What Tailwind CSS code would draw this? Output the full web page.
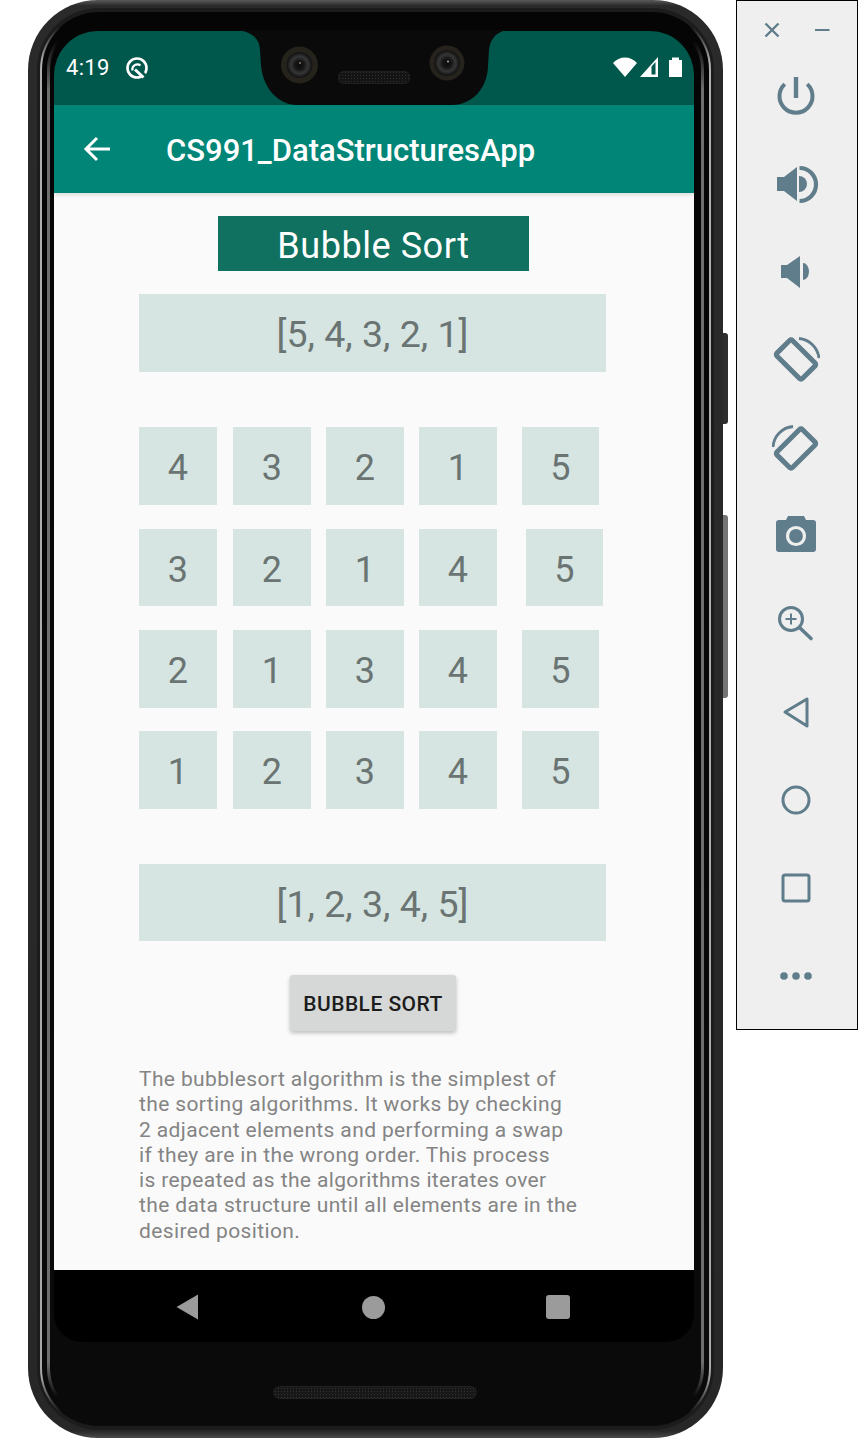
<!DOCTYPE html>
<html><head><meta charset="utf-8"><script src="https://cdn.jsdelivr.net/npm/@tailwindcss/browser@4"></script></head>
<body class="bg-white">
<div class="flex w-[858px] h-[1438px] overflow-hidden font-['Roboto',sans-serif]">
  <div class="relative w-[695px] h-[1438px] ml-[28px] shrink-0">
    <svg class="absolute inset-0 overflow-visible" width="695" height="1438" viewBox="28 0 695 1438">
      <defs>
        <linearGradient id="edge" x1="0" y1="0" x2="0" y2="1"><stop offset="0" stop-color="#5a5a5a"/><stop offset=".004" stop-color="#2a2a2a"/><stop offset=".995" stop-color="#272727"/><stop offset="1" stop-color="#4a4a4a"/></linearGradient>
        <linearGradient id="hi" x1="0" y1="0" x2="0" y2="1"><stop offset=".01" stop-color="#b0b0b0" stop-opacity="0"/><stop offset=".035" stop-color="#b0b0b0"/><stop offset=".965" stop-color="#a8a8a8"/><stop offset=".99" stop-color="#a8a8a8" stop-opacity="0"/></linearGradient>
        <linearGradient id="hi2" x1="0" y1="0" x2="0" y2="1"><stop offset=".015" stop-color="#6e6e6e" stop-opacity="0"/><stop offset=".05" stop-color="#6e6e6e"/><stop offset=".96" stop-color="#6e6e6e"/><stop offset=".985" stop-color="#6e6e6e" stop-opacity="0"/></linearGradient>
        <linearGradient id="bez" x1="0" y1="0" x2="0" y2="1"><stop offset="0" stop-color="#050505"/><stop offset=".9" stop-color="#0a0a0a"/></linearGradient>
        <pattern id="mesh" width="3" height="3" patternUnits="userSpaceOnUse"><rect width="3" height="3" fill="#141414"/><rect width="1" height="1" fill="#303030"/></pattern>
        <radialGradient id="lens"><stop offset="0" stop-color="#0c0c0c"/><stop offset=".35" stop-color="#161616"/><stop offset=".65" stop-color="#363636"/><stop offset=".95" stop-color="#141414"/></radialGradient>
      </defs>
      <rect x="716" y="333" width="12" height="91" rx="3" fill="#2e2e2e"/>
      <rect x="716" y="515" width="12" height="183" rx="3" fill="#747474"/>
      <rect x="28" y="0" width="695" height="1438" rx="70" fill="url(#edge)"/>
      <rect x="37" y="8" width="677" height="1422" rx="62" fill="#1c1c1c"/>
      <rect x="41" y="12" width="669" height="1414" rx="58" fill="url(#bez)" stroke="url(#hi)" stroke-width="2"/>
      <rect x="48.500" y="20" width="654" height="1398" rx="50" fill="none" stroke="url(#hi2)" stroke-width="3"/>
    </svg>
    <div class="relative pt-[31px] pl-[26px]">
      <div class="relative w-[640px]">
        <div class="h-[74px] bg-[#00574b] rounded-t-[44px] flex items-center text-white">
          <span class="ml-[12px] text-[22px] leading-none tracking-[0.3px]">4:19</span>
          <svg class="ml-[15px]" width="24" height="24" viewBox="0 0 24 24" fill="none" stroke="#fff"><circle cx="12" cy="12" r="9.500" stroke-width="2.600"/><path d="M14 14.500l7 7.500" stroke="#00574b" stroke-width="5"/><path d="M7.500 14.500a5 5 0 0 1 8-5" stroke-width="2.200"/><path d="M10 13.500l8.500 8" stroke-width="3"/></svg>
          <svg class="ml-auto mr-[12px] mb-[2px]" width="69" height="22" viewBox="0 0 69 22" fill="#fff"><path d="M0 7C6-.5 18-.5 24 7L12 21z"/><path fill-rule="evenodd" d="M27 21L45 1v20zM38.500 18.500h4V6l-4 4.500z"/><path d="M56 4h3V1.500h7V4h3v17H56z"/></svg>
        </div>
        <svg class="absolute left-0 top-0 overflow-visible" width="640" height="74" viewBox="54 31 640 74">
          <path fill="#0a0a0a" d="M233 30C250 30 260 38 260 50L261 65C263 90 280 105 297 105L452 105C472 105 488 88 488 65L489 50C490 38 498 30 510 30Z"/>
          <circle cx="299.500" cy="65" r="18.500" fill="#26221c"/><circle cx="299.500" cy="65" r="13" fill="url(#lens)"/><circle cx="300" cy="63" r="1" fill="#8a7a6c"/>
          <circle cx="447" cy="63" r="17.500" fill="#26221c"/><circle cx="447" cy="63" r="13" fill="url(#lens)"/><circle cx="448" cy="61.500" r="1" fill="#b0b0b0"/>
          <rect x="338.500" y="71.500" width="71" height="12" rx="5" fill="url(#mesh)" stroke="#202020"/>
        </svg>
        <div class="h-[88px] bg-[#008577] flex items-center text-white shadow-[0_2px_4px_rgba(0,0,0,0.12)] relative">
          <svg class="ml-[29px]" width="28" height="28" viewBox="0 0 28 28" fill="none" stroke="#fff" stroke-width="3"><path d="M27 14H4M14 3L3 14l11 11"/></svg>
          <span class="ml-[55px] text-[31px] font-medium leading-none mt-[3px]">CS991_DataStructuresApp</span>
        </div>
        <div class="h-[1077px] bg-[#fafafa] flex flex-col overflow-hidden">
          <div class="ml-[164px] mt-[23px] w-[311px] h-[55px] bg-[#107160] text-white text-[36px] tracking-[0.55px] leading-[61px] text-center shrink-0">Bubble Sort</div>
          <div class="ml-[85px] mt-[23px] w-[467px] h-[78px] pt-[3px] bg-[#d6e5e2] text-[#6a7472] text-[37.500px] flex items-center justify-center shrink-0">[5, 4, 3, 2, 1]</div>
          <div class="ml-[85px] mt-[55px] flex h-[78px] text-[#6a7472] text-[36px] leading-[83px] text-center shrink-0">
            <div class="w-[77.500px] bg-[#d6e5e2]">4</div>
            <div class="ml-[16.500px] w-[77.500px] bg-[#d6e5e2]">3</div>
            <div class="ml-[15.500px] w-[77.500px] bg-[#d6e5e2]">2</div>
            <div class="ml-[15.500px] w-[77.500px] bg-[#d6e5e2]">1</div>
            <div class="ml-[25px] w-[77.500px] bg-[#d6e5e2]">5</div>
          </div>
          <div class="ml-[85px] mt-[24px] flex h-[77px] text-[#6a7472] text-[36px] leading-[83px] text-center shrink-0">
            <div class="w-[77.500px] bg-[#d6e5e2]">3</div>
            <div class="ml-[16.500px] w-[77.500px] bg-[#d6e5e2]">2</div>
            <div class="ml-[15.500px] w-[77.500px] bg-[#d6e5e2]">1</div>
            <div class="ml-[15.500px] w-[77.500px] bg-[#d6e5e2]">4</div>
            <div class="ml-[29px] w-[77.500px] bg-[#d6e5e2]">5</div>
          </div>
          <div class="ml-[85px] mt-[24px] flex h-[78px] text-[#6a7472] text-[36px] leading-[83px] text-center shrink-0">
            <div class="w-[77.500px] bg-[#d6e5e2]">2</div>
            <div class="ml-[16.500px] w-[77.500px] bg-[#d6e5e2]">1</div>
            <div class="ml-[15.500px] w-[77.500px] bg-[#d6e5e2]">3</div>
            <div class="ml-[15.500px] w-[77.500px] bg-[#d6e5e2]">4</div>
            <div class="ml-[25px] w-[77.500px] bg-[#d6e5e2]">5</div>
          </div>
          <div class="ml-[85px] mt-[23px] flex h-[78px] text-[#6a7472] text-[36px] leading-[83px] text-center shrink-0">
            <div class="w-[77.500px] bg-[#d6e5e2]">1</div>
            <div class="ml-[16.500px] w-[77.500px] bg-[#d6e5e2]">2</div>
            <div class="ml-[15.500px] w-[77.500px] bg-[#d6e5e2]">3</div>
            <div class="ml-[15.500px] w-[77.500px] bg-[#d6e5e2]">4</div>
            <div class="ml-[25px] w-[77.500px] bg-[#d6e5e2]">5</div>
          </div>
          <div class="ml-[85px] mt-[55px] w-[467px] h-[77px] pt-[3px] bg-[#d6e5e2] text-[#6a7472] text-[37.500px] flex items-center justify-center shrink-0">[1, 2, 3, 4, 5]</div>
          <div class="ml-[236px] mt-[34px] w-[166px] h-[56px] pt-[3px] bg-[#d6d7d7] rounded-[3px] shadow-[0_2px_4px_rgba(0,0,0,0.25)] text-[#1c1c1c] text-[21px] tracking-[0.45px] font-medium flex items-center justify-center shrink-0">BUBBLE SORT</div>
          <p class="ml-[85px] mt-[36px] text-[21px] tracking-[0.37px] leading-[25.300px] text-[#848484] whitespace-nowrap">The bubblesort algorithm is the simplest of<br>the sorting algorithms. It works by checking<br>2 adjacent elements and performing a swap<br>if they are in the wrong order. This process<br>is repeated as the algorithms iterates over<br>the data structure until all elements are in the<br>desired position.</p>
        </div>
        <div class="h-[72px] bg-black rounded-b-[28px] flex items-center pt-[2px]">
          <svg class="ml-[121px]" width="24" height="26" viewBox="0 0 24 26" fill="#9b9b9b"><path d="M1.500 13L23 .5v25z"/></svg>
          <div class="ml-[163px] w-[23px] h-[23px] rounded-full bg-[#9b9b9b]"></div>
          <div class="ml-[161px] w-[24px] h-[24px] rounded-[3px] bg-[#9b9b9b]"></div>
        </div>
        <div class="ml-[219px] mt-[44px] w-[204px] h-[13px] rounded-full border border-[#222] bg-[radial-gradient(#353535_1px,#171717_1px)] bg-[length:3px_3px]"></div>
      </div>
    </div>
  </div>
  <div class="ml-[13px] w-[122px] h-[1030px] shrink-0 bg-[#efefef] border border-black">
    <div class="h-[51px] relative">
      <svg class="absolute left-0 top-0" width="120" height="51" viewBox="737 1 120 51" fill="none" stroke="#607d8b"><path d="M765.500 23.500l13 13M778.500 23.500l-13 13" stroke-width="2.400"/><path d="M815 30h14.500" stroke-width="2"/></svg>
    </div>
    <div class="flex flex-col items-center pr-[2px]">
      <div class="h-[88px] flex items-center justify-center">
        <svg width="48" height="48" viewBox="772 72 48 48" fill="none" stroke="#607d8b"><path d="M784.800 84.100A16.500 16.500 0 1 0 807.200 84.100" stroke-width="4"/><path d="M796 77v21" stroke-width="4.400"/></svg>
      </div>
      <div class="h-[88px] flex items-center justify-center">
        <svg width="48" height="48" viewBox="772 160 48 48" fill="#607d8b"><path d="M777 177h7l13-10v34l-13-10h-7z"/><path d="M799 176a8 8 0 0 1 0 16z"/><path d="M799.500 168a16.500 16.500 0 0 1 0 33" fill="none" stroke="#607d8b" stroke-width="4.200"/></svg>
      </div>
      <div class="h-[88px] flex items-center justify-center">
        <svg width="48" height="48" viewBox="772 248 48 48" fill="#607d8b"><path d="M781 265h6l13-9v32l-13-10h-6z"/><path d="M803 263a6 8.500 0 0 1 0 17z"/></svg>
      </div>
      <div class="h-[88px] flex items-center justify-center">
        <svg width="48" height="48" viewBox="772 336 48 48" fill="none" stroke="#607d8b"><rect x="778" y="348.500" width="36" height="22" rx="2" transform="rotate(45 796 359.500)" stroke-width="5"/><path d="M799 338.500A22 22 0 0 1 819 358" stroke-width="2.800"/></svg>
      </div>
      <div class="h-[88px] flex items-center justify-center">
        <svg width="48" height="48" viewBox="772 424 48 48" fill="none" stroke="#607d8b"><rect x="778" y="437.500" width="36" height="22" rx="2" transform="rotate(-45 796 448.500)" stroke-width="5"/><path d="M793 426.500A22 22 0 0 0 773 447" stroke-width="2.800"/></svg>
      </div>
      <div class="h-[88px] flex items-center justify-center">
        <svg width="48" height="48" viewBox="772 512 48 48" fill="#607d8b"><path fill-rule="evenodd" d="M779 520h7l2-4h16l2 4h7a3 3 0 0 1 3 3v26a3 3 0 0 1-3 3h-34a3 3 0 0 1-3-3v-26a3 3 0 0 1 3-3z"/><circle cx="796" cy="536" r="8.500" fill="none" stroke="#efefef" stroke-width="3.200"/></svg>
      </div>
      <div class="h-[88px] flex items-center justify-center">
        <svg width="48" height="48" viewBox="772 600 48 48" fill="none" stroke="#607d8b"><circle cx="791" cy="619" r="11.500" stroke-width="3"/><path d="M799.500 627.500L811 638.500" stroke-width="3.600" stroke-linecap="round"/><path d="M791 613.500v11M785.500 619h11" stroke-width="2"/></svg>
      </div>
      <div class="h-[88px] flex items-center justify-center">
        <svg width="48" height="48" viewBox="772 688 48 48" fill="none" stroke="#607d8b"><path d="M785 712l22-13v27z" stroke-width="3" stroke-linejoin="round"/></svg>
      </div>
      <div class="h-[88px] flex items-center justify-center">
        <svg width="48" height="48" viewBox="772 776 48 48" fill="none" stroke="#607d8b"><circle cx="796" cy="800" r="13" stroke-width="3"/></svg>
      </div>
      <div class="h-[88px] flex items-center justify-center">
        <svg width="48" height="48" viewBox="772 864 48 48" fill="none" stroke="#607d8b"><rect x="783" y="875" width="26" height="26" rx="2" stroke-width="3"/></svg>
      </div>
      <div class="h-[88px] flex items-center justify-center">
        <svg width="48" height="48" viewBox="772 952 48 48" fill="#607d8b"><circle cx="784" cy="976" r="3.800"/><circle cx="796" cy="976" r="3.800"/><circle cx="808" cy="976" r="3.800"/></svg>
      </div>
    </div>
  </div>
</div>
</body></html>
